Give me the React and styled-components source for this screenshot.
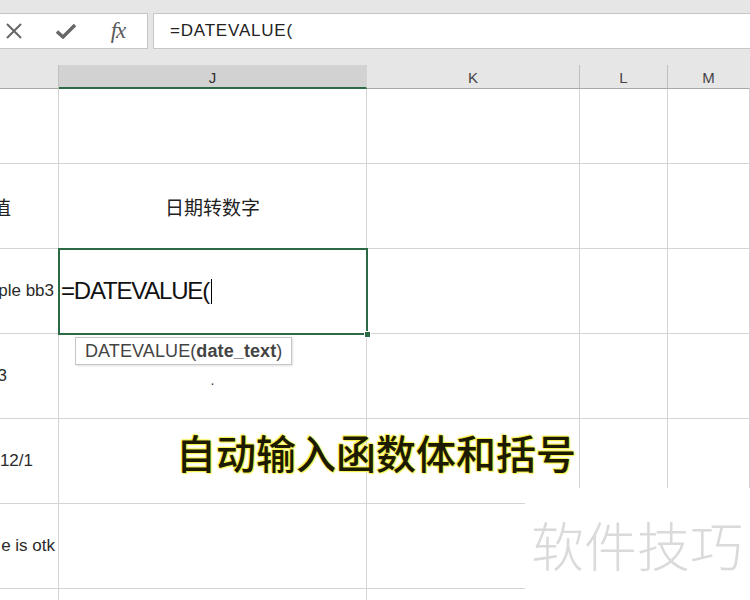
import React from 'react';
import styled, { createGlobalStyle } from 'styled-components';

const GlobalStyle = createGlobalStyle`
  body {
    margin: 0;
    background: #fff;
    font-family: "Liberation Sans", "Noto Sans CJK SC", sans-serif;
    overflow: hidden;
  }
`;

const COLS = '59px 308px 213px 88px 1fr';
const GRID = '#d4d4d4';
const GREEN = '#2a6b46';

const Page = styled.div`
  position: relative;
  width: 750px;
  height: 600px;
  overflow: hidden;
  background: #fff;
`;

const TopBar = styled.div`
  background: #e6e6e6;
  padding: 13px 0 16px;
`;

const FormulaRow = styled.div`
  display: flex;
  gap: 5px;
  height: 36px;
`;

const IconBox = styled.div`
  width: 148px;
  box-sizing: border-box;
  background: #fff;
  border: 1px solid #c6c6c6;
  border-left: none;
  display: flex;
  align-items: center;
  padding-left: 3px;
`;

const IconSlot = styled.div`
  width: ${({ w }) => w}px;
  display: flex;
  justify-content: center;
  align-items: center;
`;

const Fx = styled.span`
  font-family: "Liberation Serif", serif;
  font-style: italic;
  font-size: 23px;
  color: #5a5a5a;
  letter-spacing: -1px;
`;

const FormulaInput = styled.div`
  flex: 1;
  box-sizing: border-box;
  background: #fff;
  border: 1px solid #c6c6c6;
  border-right: none;
  display: flex;
  align-items: center;
  padding-left: 16px;
  font-size: 17px;
  letter-spacing: 0.8px;
  color: #222;
`;

const HeaderRow = styled.div`
  display: grid;
  grid-template-columns: ${COLS};
  height: 24px;
  background: #e6e6e6;
`;

const ColHead = styled.div`
  box-sizing: border-box;
  display: flex;
  justify-content: center;
  align-items: center;
  padding-top: 2px;
  font-size: 15px;
  color: ${({ active }) => (active ? '#333' : '#444')};
  background: ${({ active }) => (active ? '#d2d2d2' : '#e6e6e6')};
  border-right: 1px solid ${({ active, last }) => (active || last ? 'transparent' : '#c0c0c0')};
  border-bottom: ${({ active }) => (active ? `2px solid ${GREEN}` : '1px solid #a8a8a8')};
`;

const Sheet = styled.div`
  display: grid;
  grid-template-columns: ${COLS};
  grid-template-rows: 75px repeat(6, 85px);
`;

const Cell = styled.div`
  position: relative;
  box-sizing: border-box;
  border-right: 1px solid ${GRID};
  border-bottom: 1px solid ${GRID};
  display: flex;
  align-items: center;
  justify-content: center;
  font-family: "Liberation Sans", "Noto Sans CJK SC", sans-serif;
  font-size: 17px;
  color: #2a2a2a;
  white-space: nowrap;
`;

const CutCell = styled(Cell)`
  overflow: hidden;
  justify-content: flex-end;
  padding-right: ${({ pr }) => pr}px;
`;

const CjkText = styled.span`
  font-family: "Noto Sans CJK SC", sans-serif;
  font-size: 19px;
  color: #222;
`;

const ActiveCell = styled(Cell)`
  z-index: 2;
  justify-content: flex-start;
  outline: 2px solid ${GREEN};
  outline-offset: -1px;
  padding-left: 2px;
  font-size: 24px;
  color: #111;
  letter-spacing: -1.2px;
`;

const Caret = styled.span`
  display: inline-block;
  width: 1px;
  height: 25px;
  margin-left: 2px;
  background: #000;
`;

const FillHandle = styled.div`
  position: absolute;
  right: -5px;
  bottom: -5px;
  width: 5px;
  height: 5px;
  background: ${GREEN};
  border: 1px solid #fff;
`;

const Tip = styled.div`
  position: absolute;
  left: 16px;
  top: 88px;
  width: 217px;
  height: 28px;
  box-sizing: border-box;
  background: #fff;
  border: 1px solid #c6c6c6;
  box-shadow: 1px 1px 2px rgba(0, 0, 0, 0.12);
  display: flex;
  align-items: center;
  padding-left: 9px;
  font-size: 18px;
  letter-spacing: 0.1px;
  color: #444;
  b {
    font-weight: 700;
  }
`;

const Dot = styled.span`
  margin-top: 8px;
  font-size: 14px;
  color: #333;
`;

const Caption = styled.div`
  position: absolute;
  left: 176px;
  top: 423px;
  font-family: "Noto Sans CJK SC", sans-serif;
  font-size: 40px;
  font-weight: 500;
  color: #1c1a00;
  text-shadow:
    0 0 2px #f7f24a,
    0 0 2px #f7f24a,
    1px 1px 1px #f7f24a,
    -1px -1px 1px #f7f24a;
  white-space: nowrap;
`;

const Watermark = styled.div`
  position: absolute;
  left: 525px;
  top: 488px;
  right: 0;
  bottom: 0;
  background: #fff;
  display: flex;
  align-items: center;
  padding-left: 6px;
  font-family: "Noto Sans CJK SC", sans-serif;
  font-size: 53px;
  font-weight: 300;
  color: #dadada;
  white-space: nowrap;
`;

const CloseIcon = () => (
  <svg width="18" height="18" viewBox="0 0 18 18">
    <path d="M2 2 L16 16 M16 2 L2 16" stroke="#666" strokeWidth="2" fill="none" />
  </svg>
);

const CheckIcon = () => (
  <svg width="20" height="16" viewBox="0 0 20 16">
    <path d="M1 8.5 L7 14 L19 2" stroke="#666" strokeWidth="3.4" fill="none" strokeLinejoin="miter" />
  </svg>
);

const leftTexts = [
  { text: '', pr: 0 },
  { text: '值', pr: 47, cjk: true },
  { text: 'ple bb3', pr: 4 },
  { text: '3', pr: 51 },
  { text: '12/1', pr: 25 },
  { text: 'e is otk', pr: 3 },
  { text: '', pr: 0 },
];

const App = () => {
  return (
    <Page>
      <GlobalStyle />
      <TopBar>
        <FormulaRow>
          <IconBox>
            <IconSlot w={22}><CloseIcon /></IconSlot>
            <IconSlot w={82}><CheckIcon /></IconSlot>
            <IconSlot w={22}><Fx>fx</Fx></IconSlot>
          </IconBox>
          <FormulaInput>=DATEVALUE(</FormulaInput>
        </FormulaRow>
      </TopBar>

      <HeaderRow>
        <ColHead />
        <ColHead active>J</ColHead>
        <ColHead>K</ColHead>
        <ColHead>L</ColHead>
        <ColHead last>M</ColHead>
      </HeaderRow>

      <Sheet>
        {leftTexts.map((row, i) => (
          <React.Fragment key={i}>
            <CutCell pr={row.pr}>
              {row.cjk ? <CjkText>{row.text}</CjkText> : row.text}
            </CutCell>
            {i === 2 ? (
              <ActiveCell>
                =DATEVALUE(<Caret />
                <FillHandle />
                <Tip>
                  DATEVALUE(<b>date_text</b>)
                </Tip>
              </ActiveCell>
            ) : (
              <Cell>
                {i === 1 && <CjkText>日期转数字</CjkText>}
                {i === 3 && <Dot>.</Dot>}
              </Cell>
            )}
            <Cell />
            <Cell />
            <Cell />
          </React.Fragment>
        ))}
      </Sheet>

      <Caption>自动输入函数体和括号</Caption>
      <Watermark>软件技巧</Watermark>
    </Page>
  );
};

export default App;
